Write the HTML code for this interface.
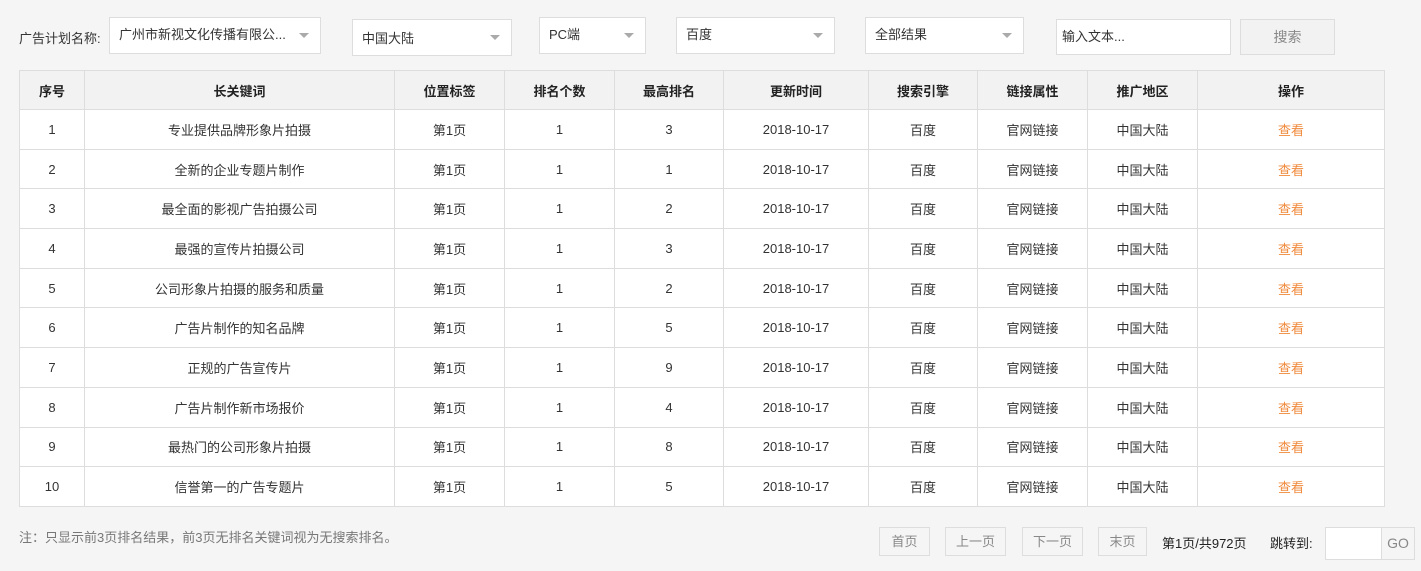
<!DOCTYPE html>
<html><head><meta charset="utf-8"><style>
*{box-sizing:border-box;margin:0;padding:0}
body{width:1421px;height:571px;background:#f5f5f5;font-family:"Liberation Sans","Noto Sans CJK SC",sans-serif;font-size:13px;color:#333;position:relative;overflow:hidden}
.a{position:absolute}
.sel{position:absolute;background:#fff;border:1px solid #ddd;padding-left:9px;line-height:34px;font-size:13px;color:#333}
.sel:after{content:"";position:absolute;right:11px;top:15px;border-left:5px solid transparent;border-right:5px solid transparent;border-top:5px solid #aaa}
table{position:absolute;left:19px;top:70px;border-collapse:collapse;background:#fff;table-layout:fixed}
td,th{border:1px solid #ddd;text-align:center;font-size:13px;color:#333;height:39.7px;padding:0}
th{background:#f2f2f2;font-weight:bold;color:#222;height:39px}
.o{color:#f08a3c}
.pb{position:absolute;top:527px;height:29px;border:1px solid #ddd;line-height:27px;text-align:center;color:#888;font-size:13px}
</style></head><body>
<div class="a" style="left:19px;top:28px">广告计划名称:</div>
<div class="sel" style="left:109px;top:17px;width:212px;height:37px">广州市新视文化传播有限公...</div>
<div class="sel" style="left:352px;top:19px;width:160px;height:37px;line-height:38px">中国大陆</div>
<div class="sel" style="left:539px;top:17px;width:107px;height:37px">PC端</div>
<div class="sel" style="left:676px;top:17px;width:159px;height:37px">百度</div>
<div class="sel" style="left:865px;top:17px;width:159px;height:37px">全部结果</div>
<div class="a" style="left:1056px;top:19px;width:175px;height:36px;background:#fff;border:1px solid #ddd;padding-left:5px;line-height:34px">输入文本...</div>
<div class="a" style="left:1240px;top:19px;width:95px;height:36px;background:#f2f2f2;border:1px solid #ddd;text-align:center;line-height:34px;color:#888;font-size:14px">搜索</div>
<table>
<colgroup><col style="width:65px"><col style="width:310px"><col style="width:110px"><col style="width:110px"><col style="width:109px"><col style="width:145px"><col style="width:109px"><col style="width:110px"><col style="width:110px"><col style="width:187px"></colgroup>
<tr><th>序号</th><th>长关键词</th><th>位置标签</th><th>排名个数</th><th>最高排名</th><th>更新时间</th><th>搜索引擎</th><th>链接属性</th><th>推广地区</th><th>操作</th></tr>
<tr><td>1</td><td>专业提供品牌形象片拍摄</td><td>第1页</td><td>1</td><td>3</td><td>2018-10-17</td><td>百度</td><td>官网链接</td><td>中国大陆</td><td class="o">查看</td></tr>
<tr><td>2</td><td>全新的企业专题片制作</td><td>第1页</td><td>1</td><td>1</td><td>2018-10-17</td><td>百度</td><td>官网链接</td><td>中国大陆</td><td class="o">查看</td></tr>
<tr><td>3</td><td>最全面的影视广告拍摄公司</td><td>第1页</td><td>1</td><td>2</td><td>2018-10-17</td><td>百度</td><td>官网链接</td><td>中国大陆</td><td class="o">查看</td></tr>
<tr><td>4</td><td>最强的宣传片拍摄公司</td><td>第1页</td><td>1</td><td>3</td><td>2018-10-17</td><td>百度</td><td>官网链接</td><td>中国大陆</td><td class="o">查看</td></tr>
<tr><td>5</td><td>公司形象片拍摄的服务和质量</td><td>第1页</td><td>1</td><td>2</td><td>2018-10-17</td><td>百度</td><td>官网链接</td><td>中国大陆</td><td class="o">查看</td></tr>
<tr><td>6</td><td>广告片制作的知名品牌</td><td>第1页</td><td>1</td><td>5</td><td>2018-10-17</td><td>百度</td><td>官网链接</td><td>中国大陆</td><td class="o">查看</td></tr>
<tr><td>7</td><td>正规的广告宣传片</td><td>第1页</td><td>1</td><td>9</td><td>2018-10-17</td><td>百度</td><td>官网链接</td><td>中国大陆</td><td class="o">查看</td></tr>
<tr><td>8</td><td>广告片制作新市场报价</td><td>第1页</td><td>1</td><td>4</td><td>2018-10-17</td><td>百度</td><td>官网链接</td><td>中国大陆</td><td class="o">查看</td></tr>
<tr><td>9</td><td>最热门的公司形象片拍摄</td><td>第1页</td><td>1</td><td>8</td><td>2018-10-17</td><td>百度</td><td>官网链接</td><td>中国大陆</td><td class="o">查看</td></tr>
<tr><td>10</td><td>信誉第一的广告专题片</td><td>第1页</td><td>1</td><td>5</td><td>2018-10-17</td><td>百度</td><td>官网链接</td><td>中国大陆</td><td class="o">查看</td></tr>
</table>
<div class="a" style="left:19px;top:527px;color:#777;font-size:13px">注：只显示前3页排名结果，前3页无排名关键词视为无搜索排名。</div>
<div class="pb" style="left:879px;width:51px">首页</div>
<div class="pb" style="left:945px;width:61px">上一页</div>
<div class="pb" style="left:1022px;width:61px">下一页</div>
<div class="pb" style="left:1098px;width:49px">末页</div>
<div class="a" style="left:1162px;top:533px;color:#222">第1页/共972页</div>
<div class="a" style="left:1270px;top:533px;color:#222">跳转到:</div>
<div class="a" style="left:1325px;top:527px;width:57px;height:33px;background:#fff;border:1px solid #ddd"></div>
<div class="a" style="left:1381px;top:527px;width:34px;height:33px;border:1px solid #ddd;line-height:31px;text-align:center;color:#888;font-size:14px">GO</div>
</body></html>
